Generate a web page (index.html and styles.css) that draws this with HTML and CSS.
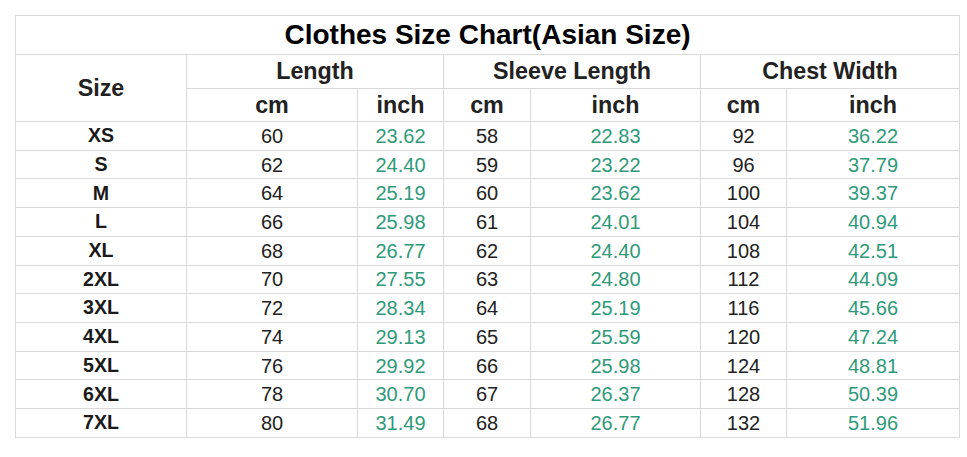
FILE: index.html
```html
<!DOCTYPE html>
<html lang="en">
<head>
<meta charset="utf-8">
<title>Clothes Size Chart(Asian Size)</title>
<link rel="stylesheet" href="styles.css">
</head>
<body>
<table class="chart">
  <colgroup>
    <col class="c-size">
    <col class="c-a">
    <col class="c-b">
    <col class="c-c">
    <col class="c-d">
    <col class="c-e">
    <col class="c-f">
  </colgroup>
  <thead>
    <tr class="r-title"><th colspan="7" class="title">Clothes Size Chart(Asian Size)</th></tr>
    <tr class="r-group">
      <th rowspan="2" class="head size-head">Size</th>
      <th colspan="2" class="head">Length</th>
      <th colspan="2" class="head">Sleeve Length</th>
      <th colspan="2" class="head">Chest Width</th>
    </tr>
    <tr class="r-unit">
      <th class="head unit">cm</th><th class="head unit">inch</th>
      <th class="head unit">cm</th><th class="head unit">inch</th>
      <th class="head unit">cm</th><th class="head unit">inch</th>
    </tr>
  </thead>
  <tbody>
    <tr><th class="sz">XS</th><td>60</td><td class="in">23.62</td><td>58</td><td class="in">22.83</td><td>92</td><td class="in">36.22</td></tr>
    <tr><th class="sz">S</th><td>62</td><td class="in">24.40</td><td>59</td><td class="in">23.22</td><td>96</td><td class="in">37.79</td></tr>
    <tr><th class="sz">M</th><td>64</td><td class="in">25.19</td><td>60</td><td class="in">23.62</td><td>100</td><td class="in">39.37</td></tr>
    <tr><th class="sz">L</th><td>66</td><td class="in">25.98</td><td>61</td><td class="in">24.01</td><td>104</td><td class="in">40.94</td></tr>
    <tr><th class="sz">XL</th><td>68</td><td class="in">26.77</td><td>62</td><td class="in">24.40</td><td>108</td><td class="in">42.51</td></tr>
    <tr><th class="sz">2XL</th><td>70</td><td class="in">27.55</td><td>63</td><td class="in">24.80</td><td>112</td><td class="in">44.09</td></tr>
    <tr><th class="sz">3XL</th><td>72</td><td class="in">28.34</td><td>64</td><td class="in">25.19</td><td>116</td><td class="in">45.66</td></tr>
    <tr><th class="sz">4XL</th><td>74</td><td class="in">29.13</td><td>65</td><td class="in">25.59</td><td>120</td><td class="in">47.24</td></tr>
    <tr><th class="sz">5XL</th><td>76</td><td class="in">29.92</td><td>66</td><td class="in">25.98</td><td>124</td><td class="in">48.81</td></tr>
    <tr><th class="sz">6XL</th><td>78</td><td class="in">30.70</td><td>67</td><td class="in">26.37</td><td>128</td><td class="in">50.39</td></tr>
    <tr><th class="sz">7XL</th><td>80</td><td class="in">31.49</td><td>68</td><td class="in">26.77</td><td>132</td><td class="in">51.96</td></tr>
  </tbody>
</table>
</body>
</html>
```
FILE: styles.css
```css
html, body {
  margin: 0;
  padding: 0;
  background: #ffffff;
}
body {
  padding: 15px 0 0 15px;
  font-family: "Liberation Sans", Arial, sans-serif;
  color: #222222;
}
.chart {
  border-collapse: collapse;
  table-layout: fixed;
  width: 944px;
  border: 1px solid #d9d9d9;
}
.chart th, .chart td {
  border: 1px solid #d9d9d9;
  padding: 0;
  text-align: center;
  vertical-align: middle;
  white-space: nowrap;
  line-height: 1;
}
.c-size { width: 171px; }
.c-a { width: 171px; }
.c-b { width: 86px; }
.c-c { width: 87px; }
.c-d { width: 170px; }
.c-e { width: 86px; }
.c-f { width: 173px; }

.r-title { height: 39px; }
.r-group { height: 34px; }
.r-unit { height: 33px; }
.chart tbody tr { height: 28.73px; }

.title {
  font-size: 28px;
  font-weight: bold;
  color: #000000;
  padding-top: 1px;
}
.head {
  font-size: 23.3px;
  font-weight: bold;
  color: #222222;
}
.chart .size-head {
  padding-top: 2px;
}
.chart .unit {
  padding-top: 2px;
}
.sz {
  font-size: 19.6px;
  font-weight: bold;
  color: #1a1a1a;
}
.chart td {
  font-size: 20px;
  color: #222222;
}
.chart td.in {
  color: #2f9a79;
}
```
